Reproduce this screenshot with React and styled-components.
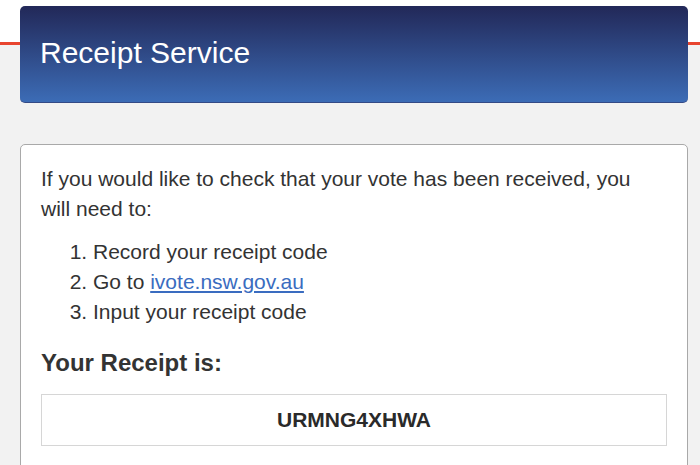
import styled, { createGlobalStyle } from 'styled-components'

const GlobalStyle = createGlobalStyle`
    html, body {
        margin: 0;
        padding: 0;
    }
    body {
        font-family: 'Liberation Sans', Arial, sans-serif;
        color: #333;
        background: linear-gradient(
            to bottom,
            #fff 0,
            #fff 42px,
            #e8452f 42px,
            #e8452f 45px,
            #f2f2f2 45px
        );
        background-repeat: no-repeat;
        background-color: #f2f2f2;
        min-height: 465px;
    }
`

const Page = styled.div`
    display: flex;
    flex-direction: column;
    gap: 41px;
    padding: 6px 12px 0 20px;
`

const Header = styled.div`
    height: 97px;
    display: flex;
    align-items: center;
    padding: 0 20px 2px;
    box-sizing: border-box;
    background: linear-gradient(to bottom, #222858, #3c6cb6);
    border-bottom: 1px solid #344a86;
    border-radius: 5px;
    color: #fff;
    font-size: 30px;
`

const Card = styled.div`
    background: #fff;
    border: 1px solid #a9a9a9;
    border-radius: 5px;
    padding: 19px 20px 30px;
    font-size: 21px;
    line-height: 30px;
`

const Intro = styled.p`
    margin: 0 10px 13px 0;
`

const Steps = styled.ol`
    margin: 0;
    padding-left: 52px;
`

const Link = styled.a`
    color: #3a6cc0;
    text-decoration: underline;
`

const ReceiptTitle = styled.h2`
    margin: 21px 0 16px;
    font-size: 24px;
    font-weight: bold;
    line-height: 30px;
`

const ReceiptBox = styled.div`
    height: 50px;
    display: flex;
    align-items: center;
    justify-content: center;
    border: 1px solid #d6d6d6;
    font-weight: bold;
    font-size: 21px;
    color: #2a2a2a;
`

const App = () => {
    return (
        <>
            <GlobalStyle />
            <Page>
                <Header>Receipt Service</Header>
                <Card>
                    <Intro>
                        If you would like to check that your vote has been received, you will need to:
                    </Intro>
                    <Steps>
                        <li>Record your receipt code</li>
                        <li>
                            Go to <Link href="#">ivote.nsw.gov.au</Link>
                        </li>
                        <li>Input your receipt code</li>
                    </Steps>
                    <ReceiptTitle>Your Receipt is:</ReceiptTitle>
                    <ReceiptBox>URMNG4XHWA</ReceiptBox>
                </Card>
            </Page>
        </>
    )
}

export default App
